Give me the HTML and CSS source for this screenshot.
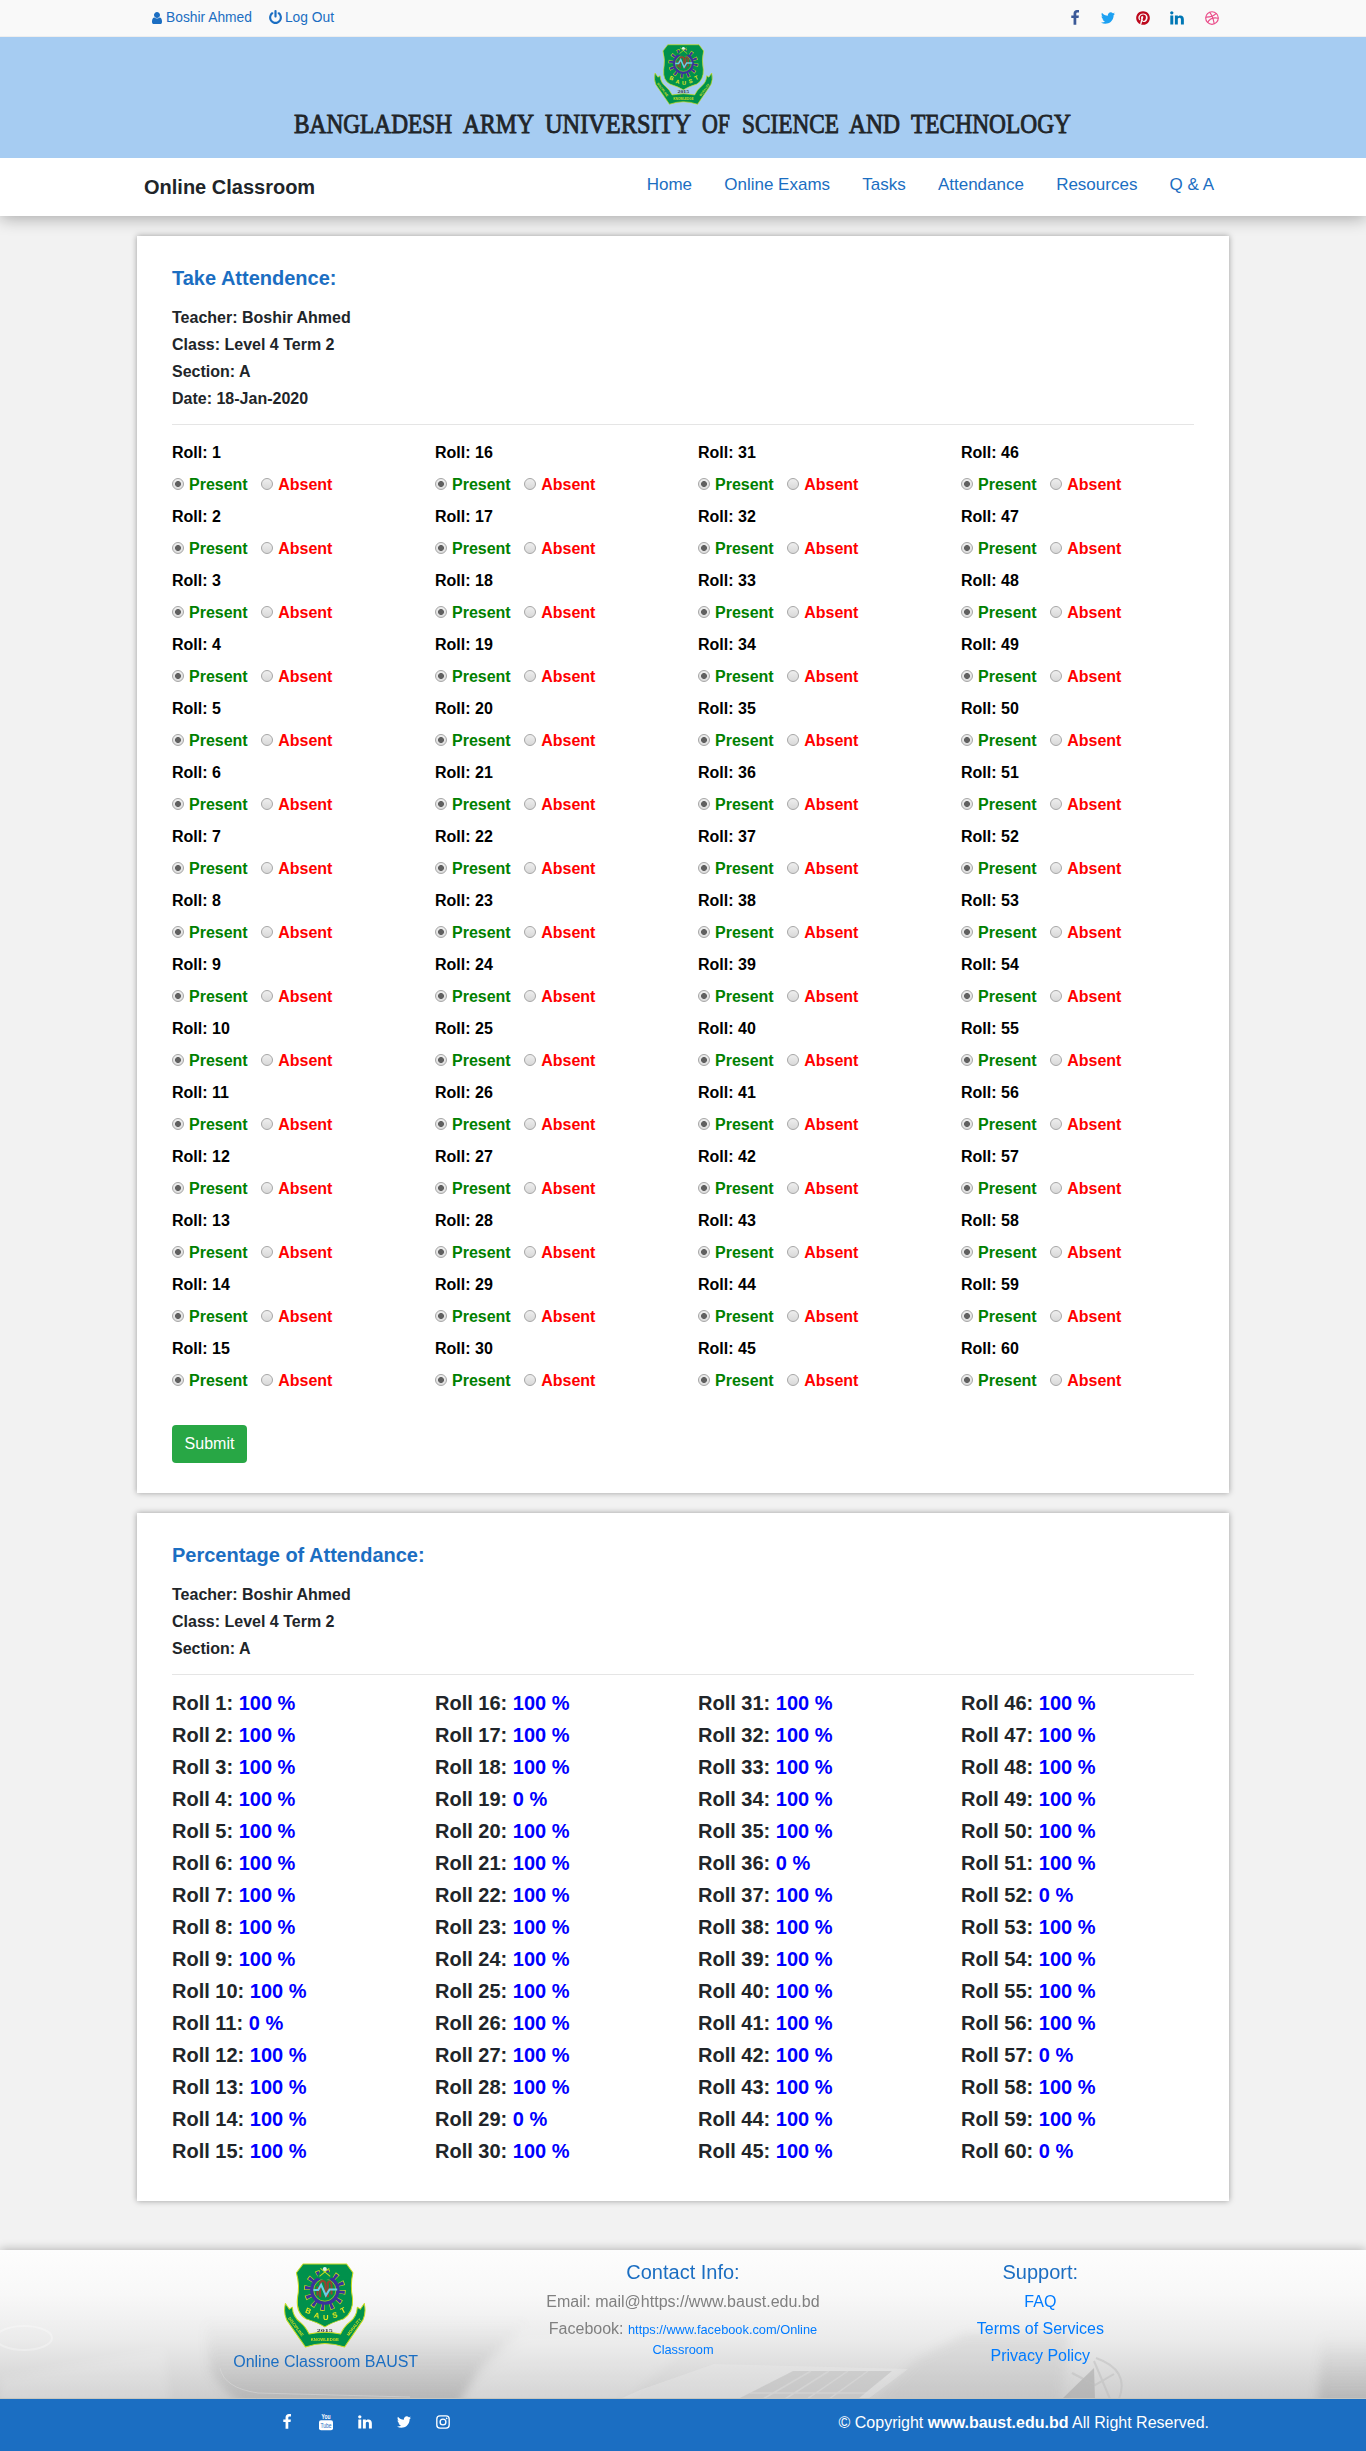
FILE: index.html
```
<!DOCTYPE html>
<html lang="en">
<head>
<meta charset="utf-8">
<title>Online Classroom</title>
<link rel="stylesheet" href="styles.css">
</head>
<body>
<svg class="defs" width="0" height="0" aria-hidden="true">
  <symbol id="user" viewBox="0 0 1792 1792"><path d="M1536 1399q0 109-62.500 187t-150.500 78h-854q-88 0-150.500-78t-62.500-187q0-85 8.500-160.500t31.500-152 58.500-131 94-89 134.500-34.500q131 128 313 128t313-128q76 0 134.500 34.500t94 89 58.500 131 31.500 152 8.500 160.500zm-256-887q0 159-112.500 271.500t-271.500 112.500-271.500-112.500-112.500-271.500 112.500-271.500 271.500-112.500 271.500 112.500 112.500 271.500z"/></symbol>
  <symbol id="power" viewBox="0 0 1792 1792"><path d="M1664 896q0 156-61 298t-164 245-245 164-298 61-298-61-245-164-164-245-61-298q0-182 80.500-343t226.500-270q43-32 95.500-25t83.500 50q32 42 24.500 94.500t-49.500 84.500q-98 74-151.500 181t-53.500 228q0 104 40.500 198.500t109.500 163.500 163.500 109.500 198.500 40.500 198.500-40.500 163.500-109.500 109.500-163.500 40.500-198.500q0-121-53.500-228t-151.500-181q-42-32-49.500-84.500t24.500-94.500q31-43 84-50t95 25q146 109 226.500 270t80.500 343zm-640-768v640q0 52-38 90t-90 38-90-38-38-90v-640q0-52 38-90t90-38 90 38 38 90z"/></symbol>
  <symbol id="facebook" viewBox="0 0 1792 1792"><path d="M1343 12v264h-157q-86 0-116 36t-30 108v189h293l-39 296h-254v759h-306v-759h-255v-296h255v-218q0-186 104-288.500t277-102.500q147 0 228 12z"/></symbol>
  <symbol id="twitter" viewBox="0 0 1792 1792"><path d="M1684 408q-67 98-162 167 1 14 1 42 0 130-38 259.500t-115.500 248.500-184.500 210.500-258 146-323 54.500q-271 0-496-145 35 4 78 4 225 0 401-138-105-2-188-64.500t-114-159.500q33 5 61 5 43 0 85-11-112-23-185.500-111.500t-73.500-205.500v-4q68 38 146 41-66-44-105-115t-39-154q0-88 44-163 121 149 294.500 238.500t371.500 99.500q-8-38-8-74 0-134 94.500-228.500t228.500-94.500q140 0 236 102 109-21 205-78-37 115-142 178 93-10 186-50z"/></symbol>
  <symbol id="pinterest" viewBox="0 0 1792 1792"><path d="M1664 896q0 209-103 385.500t-279.500 279.500-385.500 103q-111 0-218-32 59-93 78-164 9-34 54-211 20 39 73 67.500t114 28.500q121 0 216-68.500t147-188.500 52-270q0-114-59.500-214t-172.500-163-255-63q-105 0-196 29t-154.500 77-109 110.500-67 129.500-21.500 134q0 104 40 183t117 111q30 12 38-20 2-7 8-31t8-30q6-23-11-43-51-61-51-151 0-151 104.500-259.500t273.500-108.500q151 0 235.500 82t84.500 213q0 170-68.500 289t-175.500 119q-61 0-98-43.500t-23-104.500q8-35 26.500-93.500t30-103 11.500-75.500q0-50-27-83t-77-33q-62 0-105 57t-43 142q0 73 25 122l-99 418q-17 70-13 177-206-91-333-281t-127-423q0-209 103-385.500t279.500-279.500 385.500-103 385.500 103 279.500 279.500 103 385.500z"/></symbol>
  <symbol id="linkedin" viewBox="0 0 1792 1792"><path d="M477 625v991h-330v-991h330zm21-306q1 73-50.500 122t-135.500 49h-2q-82 0-132-49t-50-122q0-74 51.500-122.500t134.500-48.500 133 48.500 51 122.500zm1166 729v568h-329v-530q0-105-40.500-164.500t-126.500-59.500q-63 0-105.500 34.500t-63.500 85.500q-11 30-11 81v553h-329q2-399 2-647t-1-296l-1-48h329v144h-2q20-32 41-56t56.500-52 87-43.500 114.500-15.500q171 0 275 113.500t104 332.500z"/></symbol>
  <symbol id="dribbble" viewBox="0 0 1792 1792"><g fill="none" stroke="currentColor" stroke-width="130"><circle cx="896" cy="896" r="705"/><path d="M620 240Q1000 700 1150 1550M190 800Q950 820 1380 380M400 1400Q760 750 1600 930"/></g></symbol>
  <symbol id="instagram" viewBox="0 0 1792 1792"><g fill="none" stroke="currentColor" stroke-width="150"><rect x="203" y="203" width="1386" height="1386" rx="350"/><circle cx="896" cy="896" r="325"/></g><circle cx="1306" cy="486" r="95"/></symbol>
</svg>

<div class="topbar">
  <div class="topbar-inner">
    <div class="account">
      <a><svg class="icon-user"><use href="#user"/></svg>Boshir Ahmed</a>
      <a><svg class="icon-power"><use href="#power"/></svg>Log Out</a>
    </div>
    <div class="social">
      <svg class="fb"><use href="#facebook"/></svg>
      <svg class="tw"><use href="#twitter"/></svg>
      <svg class="pin"><use href="#pinterest"/></svg>
      <svg class="in"><use href="#linkedin"/></svg>
      <svg class="dr"><use href="#dribbble"/></svg>
    </div>
  </div>
</div>

<header class="banner">
  <svg class="crest crest-small" viewBox="42 38 245 254">
    <g id="crest-art">
      <g fill="#00914c" stroke="#c8dc1e" stroke-width="3" stroke-linejoin="round">
        <path d="M99 41H229L248 67Q239 105 247 145Q249 186 220 205Q184 216 164 229Q143 216 108 205Q78 188 82 145Q90 105 79 67Z"/>
        <path d="M46 159L58 176L67 170Q68 198 90 215Q106 228 117 250Q164 240 211 250Q222 228 238 215Q260 198 261 170L270 176L282 159Q288 188 278 208L223 289Q164 268 106 289L50 208Q40 188 46 159Z"/>
      </g>
      <circle cx="164" cy="119" r="48" fill="none" stroke="#c8dc1e" stroke-width="29" stroke-dasharray="11 14.130"/>
      <circle cx="164" cy="119" r="48" fill="none" stroke="#3b329b" stroke-width="24" stroke-dasharray="8 17.130" stroke-dashoffset="-1.500"/>
      <circle cx="164" cy="119" r="39" fill="#00914c" stroke="#3b329b" stroke-width="10"/>
      <circle cx="164" cy="119" r="33" fill="none" stroke="#c8dc1e" stroke-width="2"/>
      <path d="M140 82L164 90L188 82L180 66H148Z" fill="#00914c"/>
      <path d="M150 140V103q0-11 8-11t8 11v35M173 140V96q8-7 11 6v30M142 135V108" fill="none" stroke="#984230" stroke-width="6"/>
      <path d="M130 119H144L153 103L167 135L178 117H201" fill="none" stroke="#69cfe8" stroke-width="6"/>
      <path d="M148 78L177 54M180 78L151 54" stroke="#c8dc1e" stroke-width="3"/>
      <circle cx="164" cy="56" r="6" fill="#dff3ec"/>
      <g fill="#e6e71c" font-family="Liberation Sans, sans-serif" font-size="23" font-weight="700" text-anchor="middle">
        <text transform="translate(112 188) rotate(22)">B</text><text transform="translate(138 202) rotate(14)">A</text><text x="167" y="207">U</text><text transform="translate(196 201) rotate(-14)">S</text><text transform="translate(222 186) rotate(-28)">T</text>
      </g>
      <text x="164" y="244" font-family="Liberation Serif, serif" font-size="14" font-weight="700" text-anchor="middle" textLength="48" lengthAdjust="spacingAndGlyphs" fill="#333">2015</text>
      <g fill="#d5df20" font-family="Liberation Sans, sans-serif" font-size="13" font-weight="700" text-anchor="middle">
        <text transform="translate(74 231) rotate(53)" textLength="68" lengthAdjust="spacingAndGlyphs">DISCIPLINE</text>
        <text x="164" y="271" textLength="84" lengthAdjust="spacingAndGlyphs">KNOWLEDGE</text>
        <text transform="translate(255 232) rotate(-53)" textLength="62" lengthAdjust="spacingAndGlyphs">MORALITY</text>
      </g>
    </g>
  </svg>
  <svg class="banner-title" viewBox="0 0 780 28">
    <text x="1" y="22" textLength="158" lengthAdjust="spacingAndGlyphs">BANGLADESH</text>
    <text x="170" y="22" textLength="71" lengthAdjust="spacingAndGlyphs">ARMY</text>
    <text x="252" y="22" textLength="146" lengthAdjust="spacingAndGlyphs">UNIVERSITY</text>
    <text x="409" y="22" textLength="28" lengthAdjust="spacingAndGlyphs">OF</text>
    <text x="449" y="22" textLength="97" lengthAdjust="spacingAndGlyphs">SCIENCE</text>
    <text x="556" y="22" textLength="51" lengthAdjust="spacingAndGlyphs">AND</text>
    <text x="618" y="22" textLength="160" lengthAdjust="spacingAndGlyphs">TECHNOLOGY</text>
  </svg>
</header>

<nav class="navbar">
  <div class="navbar-inner">
    <div class="brand">Online Classroom</div>
    <div class="links"><a>Home</a><a>Online Exams</a><a>Tasks</a><a>Attendance</a><a>Resources</a><a>Q &amp; A</a></div>
  </div>
</nav>

<main>
  <section class="card">
    <h5>Take Attendence:</h5>
    <h6>Teacher: Boshir Ahmed</h6>
    <h6>Class: Level 4 Term 2</h6>
    <h6>Section: A</h6>
    <h6>Date: 18-Jan-2020</h6>
    <hr>
    <form>
      <div class="columns" id="attendance"></div>
      <button type="button" class="submit">Submit</button>
    </form>
  </section>
  <section class="card">
    <h5>Percentage of Attendance:</h5>
    <h6>Teacher: Boshir Ahmed</h6>
    <h6>Class: Level 4 Term 2</h6>
    <h6>Section: A</h6>
    <hr>
    <div class="columns" id="percentages"></div>
  </section>
</main>

<footer>
  <div class="footer-main">
    <svg class="footer-art" viewBox="0 0 1366 149" preserveAspectRatio="none">
      <defs>
        <linearGradient id="fade" x2="0" y2="1"><stop offset="0" stop-color="#fdfdfd"/><stop offset=".3" stop-color="#f8f8f8"/><stop offset=".6" stop-color="#ebebeb"/><stop offset=".85" stop-color="#d8d8d8"/><stop offset="1" stop-color="#cdcdcd"/></linearGradient>
        <linearGradient id="shade" x2="0" y2="1"><stop offset="0" stop-color="#999" stop-opacity="0"/><stop offset="1" stop-color="#888" stop-opacity=".38"/></linearGradient>
        <filter id="soft" x="-20%" y="-30%" width="140%" height="160%"><feGaussianBlur stdDeviation="5"/></filter>
      </defs>
      <rect width="1366" height="149" fill="url(#fade)"/>
      <g filter="url(#soft)">
        <path d="M205 70H530L480 118L455 160H250Q222 143 210 120Z" fill="url(#shade)"/>
        <path d="M0 128L165 98L170 155H0Z" fill="#fff" opacity=".15"/>
        <path d="M460 155L482 125L525 87H700L620 155Z" fill="#fff" opacity=".15"/>
        <path d="M1322 85H1376V160H1317Z" fill="url(#shade)"/>
        <path d="M870 155L915 110L965 84H1070L1060 155Z" fill="#aaa" opacity=".2"/>
      </g>
      <path d="M220 118Q224 138 258 143L410 147" fill="none" stroke="#ddd" opacity=".5"/>
      <ellipse cx="24" cy="88" rx="28" ry="12" fill="none" stroke="#fff" stroke-width="2" opacity=".3"/>
      <path d="M640 140L714 114L908 119L868 149H620Z" fill="#eee" opacity=".3"/>
      <path d="M738 149L793 121H892L858 149Z" fill="#aaa" opacity=".35"/>
      <path d="M763 149L811 121M785 149L829 121M807 149L848 121M829 149L868 121M750 143H870" stroke="#ddd" stroke-width="1.500" opacity=".5"/>
      <path d="M1062 149L1094 118L1095 149Z" fill="#999" opacity=".45"/>
      <path d="M1096 108Q1130 120 1119 149M1094 111L1110 149M1072 123L1095 135L1114 124" fill="none" stroke="#bbb" stroke-width="2" opacity=".5"/>
      <path d="M0 148.500H1366" stroke="#c6c6be"/>
    </svg>
    <div class="footer-cols">
      <div class="about"><svg class="crest crest-large" viewBox="42 38 245 254"><use href="#crest-art"/></svg><p>Online Classroom BAUST</p></div>
      <div><h5>Contact Info:</h5><p class="muted">Email: mail@https://www.baust.edu.bd</p><p class="muted">Facebook: <a class="small">https://www.facebook.com/Online Classroom</a></p></div>
      <div><h5>Support:</h5><p><a>FAQ</a></p><p><a>Terms of Services</a></p><p><a>Privacy Policy</a></p></div>
    </div>
  </div>
  <div class="footer-bottom">
    <div class="footer-social">
      <svg><use href="#facebook"/></svg>
      <svg class="yt" viewBox="0 0 16 18"><rect x="1" y="7.300" width="14" height="10" rx="2"/><text x="8" y="6.200" text-anchor="middle" textLength="9" lengthAdjust="spacingAndGlyphs" font-size="7.500" font-weight="700">You</text><text x="8" y="15" text-anchor="middle" textLength="11" lengthAdjust="spacingAndGlyphs" font-size="6.500" fill="#1b6ec2">Tube</text></svg>
      <svg><use href="#linkedin"/></svg>
      <svg><use href="#twitter"/></svg>
      <svg><use href="#instagram"/></svg>
    </div>
    <div class="copyright">© Copyright <b>www.baust.edu.bd</b> All Right Reserved.</div>
  </div>
</footer>
<script src="script.js"></script>
</body>
</html>
```
FILE: styles.css
```
* { box-sizing: border-box; }
body { margin: 0; background: #f2f2f2; color: #212529; font: 16px/24px "Liberation Sans", Arial, sans-serif; }
h5, h6, p { margin: 0; }
h5 { font-size: 20px; line-height: 24px; }
svg { fill: currentColor; display: block; flex: none; }
.defs { position: absolute; }

.topbar { height: 37px; background: #f9f9f9; border-bottom: 1px solid #eee; color: #1b6ec2; font-size: 13.8px; }
.topbar-inner { width: 1140px; margin: 0 auto; height: 35px; padding: 0 33px 0 38px; display: flex; justify-content: space-between; align-items: center; }
.account { display: flex; gap: 16px; }
.account a { display: flex; align-items: center; }
.icon-user { width: 14px; height: 14px; margin: 0 2px 0 -1px; }
.icon-power { width: 15px; height: 15px; margin: -1px 2px 0 0; }
.social { display: flex; gap: 18.6px; }
.social svg { width: 16px; height: 16px; }
.social .fb { margin-right: -1px; color: #3b5998; }
.tw { color: #1da1f2; }
.pin { color: #bd081c; }
.in { color: #0077b5; }
.dr { color: #ea4c89; }

.banner { position: relative; z-index: 1; height: 121px; background: #a6ccf2; padding-top: 7px; display: flex; flex-direction: column; align-items: center; }
.crest-small { width: 59px; height: 61px; }
.banner-title { width: 780px; height: 28px; margin-top: 6px; font: 28px "Liberation Serif", serif; overflow: visible; }
.banner-title text { fill: #212529; stroke: #212529; stroke-width: .9px; }

.navbar { height: 58px; background: #fff; box-shadow: 0 2px 16px rgba(0, 0, 0, .32); }
.navbar-inner { width: 1140px; height: 58px; margin: 0 auto; padding: 0 39px 0 31px; display: flex; justify-content: space-between; }
.brand { font-size: 20px; font-weight: 700; padding-top: 17px; }
.links { display: flex; gap: 32.2px; padding-top: 15px; color: #1b6ec2; font-size: 17px; }

main { width: 1092px; margin: 20px auto 49px; display: grid; gap: 20px; }
.card { position: relative; min-width: 0; background: #fff; padding: 30px 35px; box-shadow: 0 0 6px rgba(0, 0, 0, .36); }
.card h5 { color: #1b6ec2; margin-bottom: 18px; }
.card h6 { font-size: 16px; line-height: 19px; margin-bottom: 8px; }
hr { border: 0; border-top: 1px solid #e5e5e5; margin: 16px 0; }
.columns { display: grid; grid-template-columns: repeat(4, 263px); margin-right: -30px; }
#attendance { font-weight: 700; color: #000; }
.roll, .choice { height: 24px; margin-bottom: 8px; }
.choice { display: flex; align-items: center; }
.choice label { display: flex; align-items: center; gap: 5px; margin-right: 13.5px; }
.present { color: green; }
.absent { color: red; }
input { appearance: none; width: 12px; height: 12px; margin: -2px 0 0; border: 1px solid #a6a6a6; border-radius: 50%; background: linear-gradient(#eee, #d9d9d9); }
input:checked { background: radial-gradient(circle, #606060 2.6px, transparent 3.3px), linear-gradient(#eee, #ddd); }
.submit { display: block; width: 75px; height: 38px; margin-top: 24px; padding: 0; border: 0; border-radius: 4px; background: #28a745; color: #fff; font: 16px/36px "Liberation Sans", Arial, sans-serif; }
.percent { font-size: 20px; line-height: 24px; font-weight: 700; margin-bottom: 8px; }
.percent span { color: #00f; }

.footer-main { position: relative; height: 149px; box-shadow: 0 0 10px rgba(0, 0, 0, .3); }
.footer-art { position: absolute; inset: 0; width: 100%; height: 100%; }
.footer-cols { position: relative; width: 1072px; margin: 0 auto; padding-top: 10px; display: grid; grid-template-columns: repeat(3, 1fr); text-align: center; color: #1b6ec2; }
.footer-cols h5 { font-weight: 400; margin-bottom: 6px; }
.footer-cols p { margin-bottom: 3px; }
.footer-cols a { color: #007bff; }
.footer-cols .muted { color: gray; padding: 0 30px; }
.small { font-size: 12.8px; }
.footer-cols .muted:last-child { line-height: 19px; padding: 2px 40px 0; }
.about { display: flex; flex-direction: column; align-items: center; }
.crest-large { width: 82px; height: 85px; margin: 3px 2px 2px 0; }
.footer-bottom { position: relative; height: 52px; background: #1b6ec2; color: #fff; display: flex; justify-content: space-between; align-items: flex-start; padding: 12px 157px 0 279px; }
.footer-social { display: flex; gap: 23px; padding-top: 3px; }
.footer-social svg { width: 16px; height: 16px; }
.footer-social .yt { height: 18px; margin-top: -1px; font-family: "Liberation Sans", sans-serif; }
```
FILE: script.js
```
const attendance = document.getElementById("attendance");
const percentages = document.getElementById("percentages");
const absentees = [11, 19, 29, 36, 52, 57, 60];

for (let column = 0; column < 4; column++) {
  let choices = "";
  let totals = "";
  for (let row = 1; row <= 15; row++) {
    const roll = column * 15 + row;
    choices += `<div class="roll">Roll: ${roll}</div>
      <div class="choice">
        <label class="present"><input type="radio" name="roll${roll}" checked>Present</label>
        <label class="absent"><input type="radio" name="roll${roll}">Absent</label>
      </div>`;
    totals += `<div class="percent">Roll ${roll}: <span>${absentees.includes(roll) ? 0 : 100} %</span></div>`;
  }
  attendance.insertAdjacentHTML("beforeend", `<div>${choices}</div>`);
  percentages.insertAdjacentHTML("beforeend", `<div>${totals}</div>`);
}
```
